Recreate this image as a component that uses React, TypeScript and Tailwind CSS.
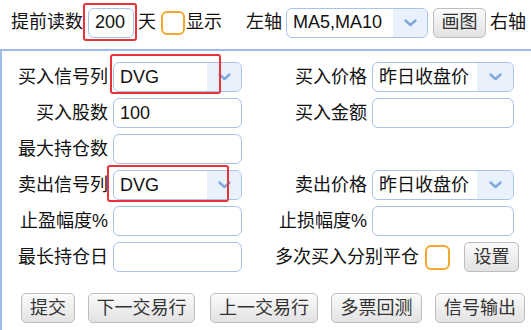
import type { ReactNode } from 'react';

const font = 'font-["Liberation_Sans","Noto_Sans_CJK_SC",sans-serif]';

function Chevron() {
  return (
    <svg width="13" height="8" viewBox="0 0 13 8" fill="none">
      <path d="M1.5 1.5 L6.5 6 L11.5 1.5" stroke="#7fa8de" strokeWidth="2.4" strokeLinecap="round" strokeLinejoin="round" />
    </svg>
  );
}

function Select({ value, width, arrow = 34 }: { value: string; width: string; arrow?: number }) {
  return (
    <div className={`flex h-[30px] ${width} overflow-hidden rounded-[6px] border border-[#a8c3ea] bg-white`}>
      <div className="flex flex-1 items-center pl-[6px] text-[18px] text-[#111]">{value}</div>
      <div className="flex items-center justify-center bg-[#e9f1fc]" style={{ width: arrow }}>
        <Chevron />
      </div>
    </div>
  );
}

function Input({ value = '', width }: { value?: string; width: string }) {
  return (
    <div className={`flex h-[30px] ${width} items-center rounded-[6px] border border-[#a8c3ea] bg-white pl-[6px] text-[18px] text-[#111]`}>
      {value}
    </div>
  );
}

function Checkbox() {
  return <div className="h-[25px] w-[25px] rounded-[6px] border-2 border-[#f4a72e] bg-white" />;
}

function Button({ children, width }: { children: ReactNode; width: string }) {
  return (
    <div
      className={`flex h-[30px] ${width} items-center justify-center rounded-[5px] border border-[#bdbdbd] bg-gradient-to-b from-[#fbfbfb] to-[#e2e2e2] text-[18px] text-[#333]`}
    >
      {children}
    </div>
  );
}

function Row({ left, right }: { left: ReactNode; right: ReactNode }) {
  return (
    <div className="flex h-[30px] items-center">
      {left}
      {right}
    </div>
  );
}

function LeftField({ label, children }: { label: string; children: ReactNode }) {
  return (
    <div className="flex items-center">
      <div className="w-[106px] whitespace-nowrap text-right">{label}</div>
      <div className="ml-[5px]">{children}</div>
    </div>
  );
}

function RightField({ label, children }: { label: string; children: ReactNode }) {
  return (
    <div className="flex items-center">
      <div className="w-[125px] whitespace-nowrap text-right">{label}</div>
      <div className="ml-[5px]">{children}</div>
    </div>
  );
}

export default function App() {
  return (
    <div className={`relative h-[330px] w-[531px] overflow-hidden bg-white text-[18px] text-[#111] ${font}`}>
      {/* top bar */}
      <div className="flex h-[44px] items-center whitespace-nowrap pl-[11px] pt-[1px]">
        <span>提前读数</span>
        <div className="ml-[5px] flex h-[30px] w-[46px] items-center rounded-[6px] border border-[#a8c3ea] pl-[6px]">200</div>
        <span className="ml-[4px]">天</span>
        <div className="ml-[5px]">
          <div className="h-[24px] w-[24px] rounded-[6px] border-2 border-[#f4a72e]" />
        </div>
        <span className="ml-[1px]">显示</span>
        <span className="ml-[24px]">左轴</span>
        <div className="ml-[4px]">
          <Select value="MA5,MA10" width="w-[142px]" />
        </div>
        <div className="ml-[5px]">
          <Button width="w-[53px]">画图</Button>
        </div>
        <span className="ml-[4px]">右轴</span>
      </div>

      {/* panel */}
      <div className="mt-[5px] h-[290px] border-l-2 border-t-2 border-[#9dbae8] pt-[11px]">
        <div className="flex flex-col gap-[6px]">
          <Row
            left={
              <LeftField label="买入信号列">
                <Select value="DVG" width="w-[129px]" />
              </LeftField>
            }
            right={
              <RightField label="买入价格">
                <Select value="昨日收盘价" width="w-[142px]" arrow={36} />
              </RightField>
            }
          />
          <Row
            left={
              <LeftField label="买入股数">
                <Input value="100" width="w-[129px]" />
              </LeftField>
            }
            right={
              <RightField label="买入金额">
                <Input width="w-[142px]" />
              </RightField>
            }
          />
          <Row
            left={
              <LeftField label="最大持仓数">
                <Input width="w-[129px]" />
              </LeftField>
            }
            right={null}
          />
          <Row
            left={
              <LeftField label="卖出信号列">
                <Select value="DVG" width="w-[129px]" />
              </LeftField>
            }
            right={
              <RightField label="卖出价格">
                <Select value="昨日收盘价" width="w-[142px]" arrow={36} />
              </RightField>
            }
          />
          <Row
            left={
              <LeftField label="止盈幅度%">
                <Input width="w-[129px]" />
              </LeftField>
            }
            right={
              <RightField label="止损幅度%">
                <Input width="w-[142px]" />
              </RightField>
            }
          />
          <Row
            left={
              <LeftField label="最长持仓日">
                <Input width="w-[129px]" />
              </LeftField>
            }
            right={
              <div className="flex items-center">
                <span className="ml-[33px] whitespace-nowrap">多次买入分别平仓</span>
                <div className="ml-[6px]">
                  <Checkbox />
                </div>
                <div className="ml-[14px]">
                  <Button width="w-[55px]">设置</Button>
                </div>
              </div>
            }
          />
        </div>

        <div className="mt-[21px] flex items-center gap-[13px] pl-[19px]">
          <Button width="w-[54px]">提交</Button>
          <Button width="w-[107px]">下一交易行</Button>
          <div className="ml-[2px]">
            <Button width="w-[108px]">上一交易行</Button>
          </div>
          <Button width="w-[91px]">多票回测</Button>
          <Button width="w-[90px]">信号输出</Button>
        </div>
      </div>

      {/* red annotation boxes */}
      <div className="absolute left-[83px] top-[3px] h-[38px] w-[54px] rounded-[3px] border-2 border-[#e8333d]" />
      <div className="absolute left-[110px] top-[54px] h-[40px] w-[111px] rounded-[3px] border-2 border-[#e8333d]" />
      <div className="absolute left-[107px] top-[165px] h-[37px] w-[122px] rounded-[3px] border-2 border-[#e8333d]" />
    </div>
  );
}
